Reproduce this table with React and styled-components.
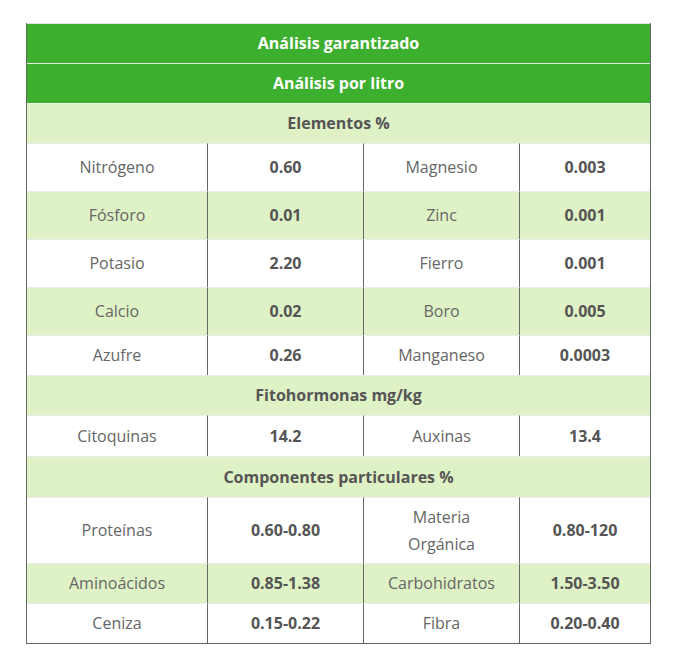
import React from "react";
import styled, { createGlobalStyle } from "styled-components";

const Global = createGlobalStyle`
  html, body { margin: 0; padding: 0; background: #ffffff; }
  body { font-family: "Open Sans", "Noto Sans", Arial, sans-serif; }
`;

const Page = styled.div`
  padding: 23px 0 0 26px;
`;

const Table = styled.table`
  width: 625px;
  border-collapse: separate;
  border-spacing: 0;
  table-layout: fixed;
  border-left: 1px solid #666666;
  border-right: 1px solid #666666;
  border-bottom: 1px solid #666666;
  font-size: 16px;
  line-height: 27px;
`;

const Row = styled.tr`
  height: ${(p) => p.$h}px;
  background: ${(p) =>
    p.$tone === "main" ? "#3caf2e" : p.$tone === "soft" ? "#dff2c5" : "#ffffff"};
`;

const Cell = styled.td`
  padding: 0 10px;
  text-align: center;
  vertical-align: middle;
  border-top: 1px solid ${(p) => (p.$tone === "main" ? "#e6e6e6" : "#ececec")};
  color: #666666;
  font-weight: 400;
  & + & {
    border-left: 1px solid #666666;
  }
`;

const Value = styled(Cell)`
  color: #555555;
  font-weight: 700;
`;

const Head = styled(Cell)`
  font-weight: 700;
  color: ${(p) => (p.$tone === "main" ? "#ffffff" : "#555555")};
`;

const sections = [
  { title: "Análisis garantizado", tone: "main", h: 40 },
  { title: "Análisis por litro", tone: "main", h: 40 },
  { title: "Elementos %", tone: "soft", h: 40 },
  { cells: ["Nitrógeno", "0.60", "Magnesio", "0.003"], tone: "white", h: 48 },
  { cells: ["Fósforo", "0.01", "Zinc", "0.001"], tone: "soft", h: 48 },
  { cells: ["Potasio", "2.20", "Fierro", "0.001"], tone: "white", h: 48 },
  { cells: ["Calcio", "0.02", "Boro", "0.005"], tone: "soft", h: 48 },
  { cells: ["Azufre", "0.26", "Manganeso", "0.0003"], tone: "white", h: 40 },
  { title: "Fitohormonas mg/kg", tone: "soft", h: 40 },
  { cells: ["Citoquinas", "14.2", "Auxinas", "13.4"], tone: "white", h: 41 },
  { title: "Componentes particulares %", tone: "soft", h: 41 },
  {
    cells: ["Proteínas", "0.60-0.80", ["Materia", "Orgánica"], "0.80-120"],
    tone: "white",
    h: 66,
  },
  { cells: ["Aminoácidos", "0.85-1.38", "Carbohidratos", "1.50-3.50"], tone: "soft", h: 40 },
  { cells: ["Ceniza", "0.15-0.22", "Fibra", "0.20-0.40"], tone: "white", h: 40 },
];

const renderText = (t) =>
  Array.isArray(t) ? (
    <>
      {t[0]}
      <br />
      {t[1]}
    </>
  ) : (
    t
  );

export default function App() {
  return (
    <>
      <Global />
      <Page>
        <Table>
          <colgroup>
            <col style={{ width: 180 }} />
            <col style={{ width: 156 }} />
            <col style={{ width: 156 }} />
            <col style={{ width: 131 }} />
          </colgroup>
          <tbody>
            {sections.map((s, i) =>
              s.title ? (
                <Row key={i} $tone={s.tone} $h={s.h}>
                  <Head colSpan={4} $tone={s.tone}>
                    {s.title}
                  </Head>
                </Row>
              ) : (
                <Row key={i} $tone={s.tone} $h={s.h}>
                  <Cell $tone={s.tone}>{renderText(s.cells[0])}</Cell>
                  <Value $tone={s.tone}>{s.cells[1]}</Value>
                  <Cell $tone={s.tone}>{renderText(s.cells[2])}</Cell>
                  <Value $tone={s.tone}>{s.cells[3]}</Value>
                </Row>
              )
            )}
          </tbody>
        </Table>
      </Page>
    </>
  );
}
